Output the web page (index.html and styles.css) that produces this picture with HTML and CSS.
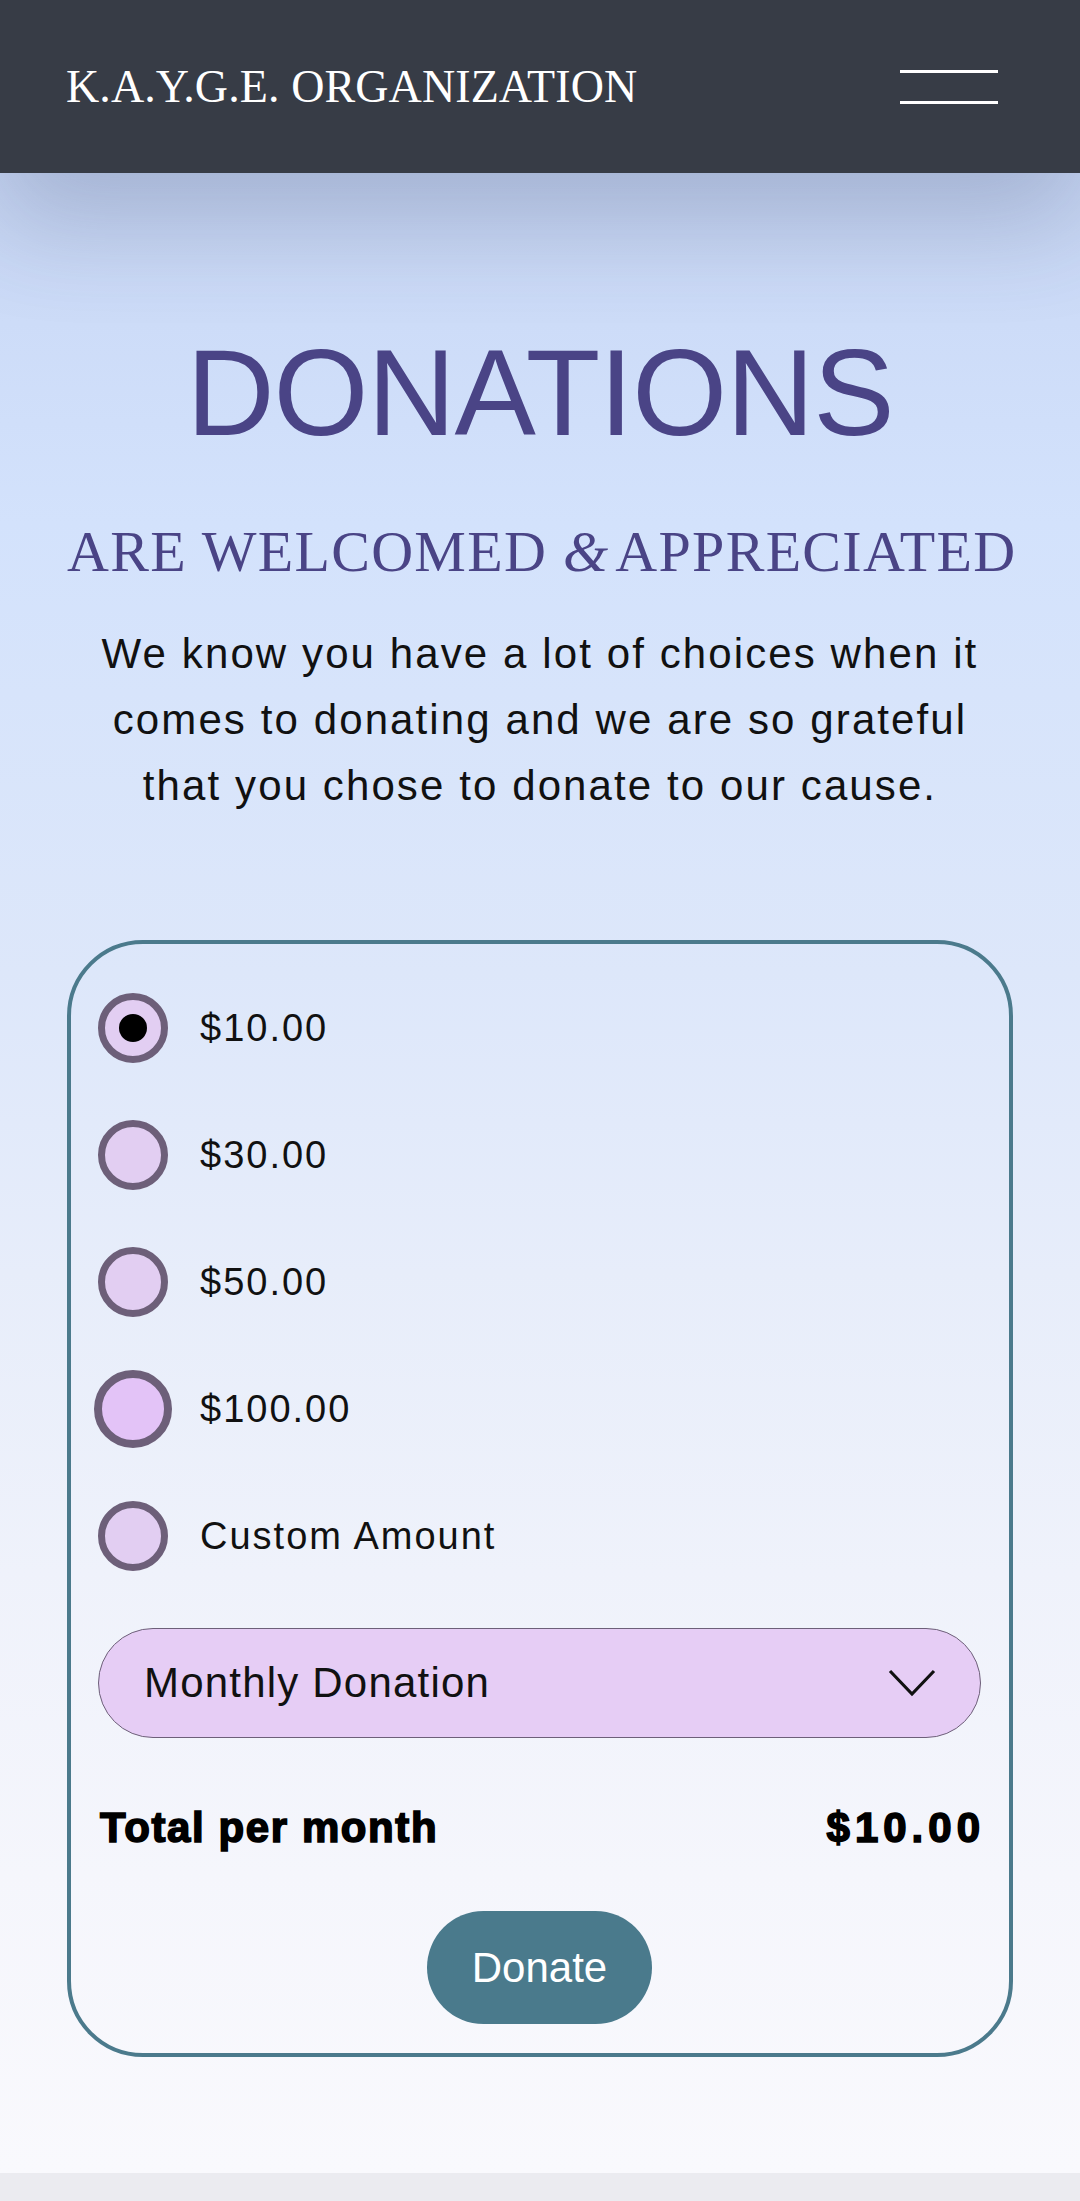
FILE: index.html
```html
<!DOCTYPE html>
<html lang="en">
<head>
<meta charset="utf-8">
<title>Donations - K.A.Y.G.E. Organization</title>
<link rel="stylesheet" href="styles.css">
</head>
<body>
<header class="site-header">
  <div class="brand">K.A.Y.G.E. ORGANIZATION</div>
  <button class="menu-btn" aria-label="Menu"><span></span><span></span></button>
</header>
<main class="page">
  <h1 class="title">DONATIONS</h1>
  <h2 class="subtitle">ARE WELCOMED <em>&amp;</em>APPRECIATED</h2>
  <p class="intro">We know you have a lot of choices when it<br>comes to donating and we are so grateful<br>that you chose to donate to our cause.</p>
  <form class="donate-card">
    <div class="options">
      <label class="option"><span class="radio checked"></span><span class="opt-label">$10.00</span></label>
      <label class="option"><span class="radio"></span><span class="opt-label">$30.00</span></label>
      <label class="option"><span class="radio"></span><span class="opt-label">$50.00</span></label>
      <label class="option"><span class="radio hovered"></span><span class="opt-label">$100.00</span></label>
      <label class="option"><span class="radio"></span><span class="opt-label">Custom Amount</span></label>
    </div>
    <div class="select">
      <span>Monthly Donation</span>
      <svg class="chevron" width="48" height="28" viewBox="0 0 48 28" aria-hidden="true"><polyline points="2,2 24,25 46,2" fill="none" stroke="#111" stroke-width="3.2"/></svg>
    </div>
    <div class="total">
      <span class="total-label">Total per month</span>
      <span class="total-amount">$10.00</span>
    </div>
    <button type="button" class="donate-btn">Donate</button>
  </form>
</main>
<footer class="site-footer"></footer>
</body>
</html>
```
FILE: styles.css
```css
* { box-sizing: border-box; }
html, body { margin: 0; padding: 0; }
body {
  font-family: "Liberation Sans", Arial, sans-serif;
  background: #f9f9fd;
  color: #111;
}

.site-header {
  position: relative;
  z-index: 1;
  height: 173px;
  background: #373c46;
  display: flex;
  align-items: center;
  justify-content: space-between;
  padding: 0 82px 0 66px;
  box-shadow: 0 50px 100px rgba(60, 70, 110, 0.24);
}
.brand {
  font-family: "Liberation Serif", "Times New Roman", serif;
  font-size: 46px;
  line-height: 1;
  color: #fff;
  letter-spacing: 0.1px;
}
.menu-btn {
  width: 98px;
  height: 34px;
  padding: 0;
  border: 0;
  background: none;
  display: flex;
  flex-direction: column;
  justify-content: space-between;
}
.menu-btn span {
  display: block;
  height: 3px;
  background: #fff;
}

.page {
  background: linear-gradient(to bottom,
    #c6d5f3 0px,
    #cddcf8 150px,
    #d3e2fc 350px,
    #d7e4fb 520px,
    #dde7fa 800px,
    #e7edfa 1100px,
    #eff2fb 1400px,
    #f5f6fc 1700px,
    #f9f9fd 2000px);
  padding: 159px 67px 116px;
  text-align: center;
}
.title {
  margin: 0;
  font-size: 122px;
  line-height: 1;
  font-weight: 400;
  letter-spacing: -1px;
  color: #4a4486;
}
.subtitle {
  margin: 69px 0 0;
  font-family: "Liberation Serif", "Times New Roman", serif;
  font-weight: 400;
  font-size: 58px;
  line-height: 1;
  letter-spacing: 1.3px;
  color: #4a4486;
  white-space: nowrap;
}
.subtitle em {
  font-style: italic;
  margin-right: 6px;
}
.intro {
  margin: 40px 0 0;
  font-size: 42px;
  line-height: 66px;
  letter-spacing: 2.1px;
  color: #111;
}

.donate-card {
  margin: 121px 0 0;
  border: 4px solid #4b7a8c;
  border-radius: 76px;
  padding: 49px 28px 29px 27px;
  text-align: left;
  display: flex;
  flex-direction: column;
}
.options {
  display: flex;
  flex-direction: column;
  gap: 57px;
}
.option {
  display: flex;
  align-items: center;
  gap: 32px;
  height: 70px;
}
.radio {
  flex: none;
  width: 70px;
  height: 70px;
  border-radius: 50%;
  border: 7px solid #6d5f79;
  background: #e2cef2;
  display: flex;
  align-items: center;
  justify-content: center;
}
.radio.checked::after {
  content: "";
  width: 28px;
  height: 28px;
  border-radius: 50%;
  background: #000;
}
.radio.hovered {
  width: 78px;
  height: 78px;
  margin: -4px;
  border-width: 8px;
  background: #e3c3f7;
}
.opt-label {
  font-size: 38px;
  letter-spacing: 2px;
  color: #111;
}

.select {
  margin-top: 57px;
  height: 110px;
  border: 1.5px solid #6d5f79;
  border-radius: 55px;
  background: #e6cdf5;
  display: flex;
  align-items: center;
  justify-content: space-between;
  padding: 0 44px 0 45px;
  font-size: 42px;
  letter-spacing: 1.2px;
  color: #111;
}
.chevron { display: block; }

.total {
  margin-top: 69px;
  display: flex;
  justify-content: space-between;
  font-weight: 700;
  font-size: 42px;
  line-height: 1;
  padding-left: 2px;
  color: #000;
}
.total-label {
  letter-spacing: 1.6px;
  -webkit-text-stroke: 1.6px #000;
}
.total-amount {
  letter-spacing: 5px;
  margin-right: -4px;
  -webkit-text-stroke: 1.6px #000;
}

.donate-btn {
  margin: 62px auto 0;
  width: 225px;
  height: 113px;
  border: 0;
  border-radius: 57px;
  background: #4a7a8c;
  color: #fff;
  font-family: "Liberation Sans", Arial, sans-serif;
  font-size: 42px;
  padding: 0;
}

.site-footer {
  height: 28px;
  background: #ebebf0;
}
```
